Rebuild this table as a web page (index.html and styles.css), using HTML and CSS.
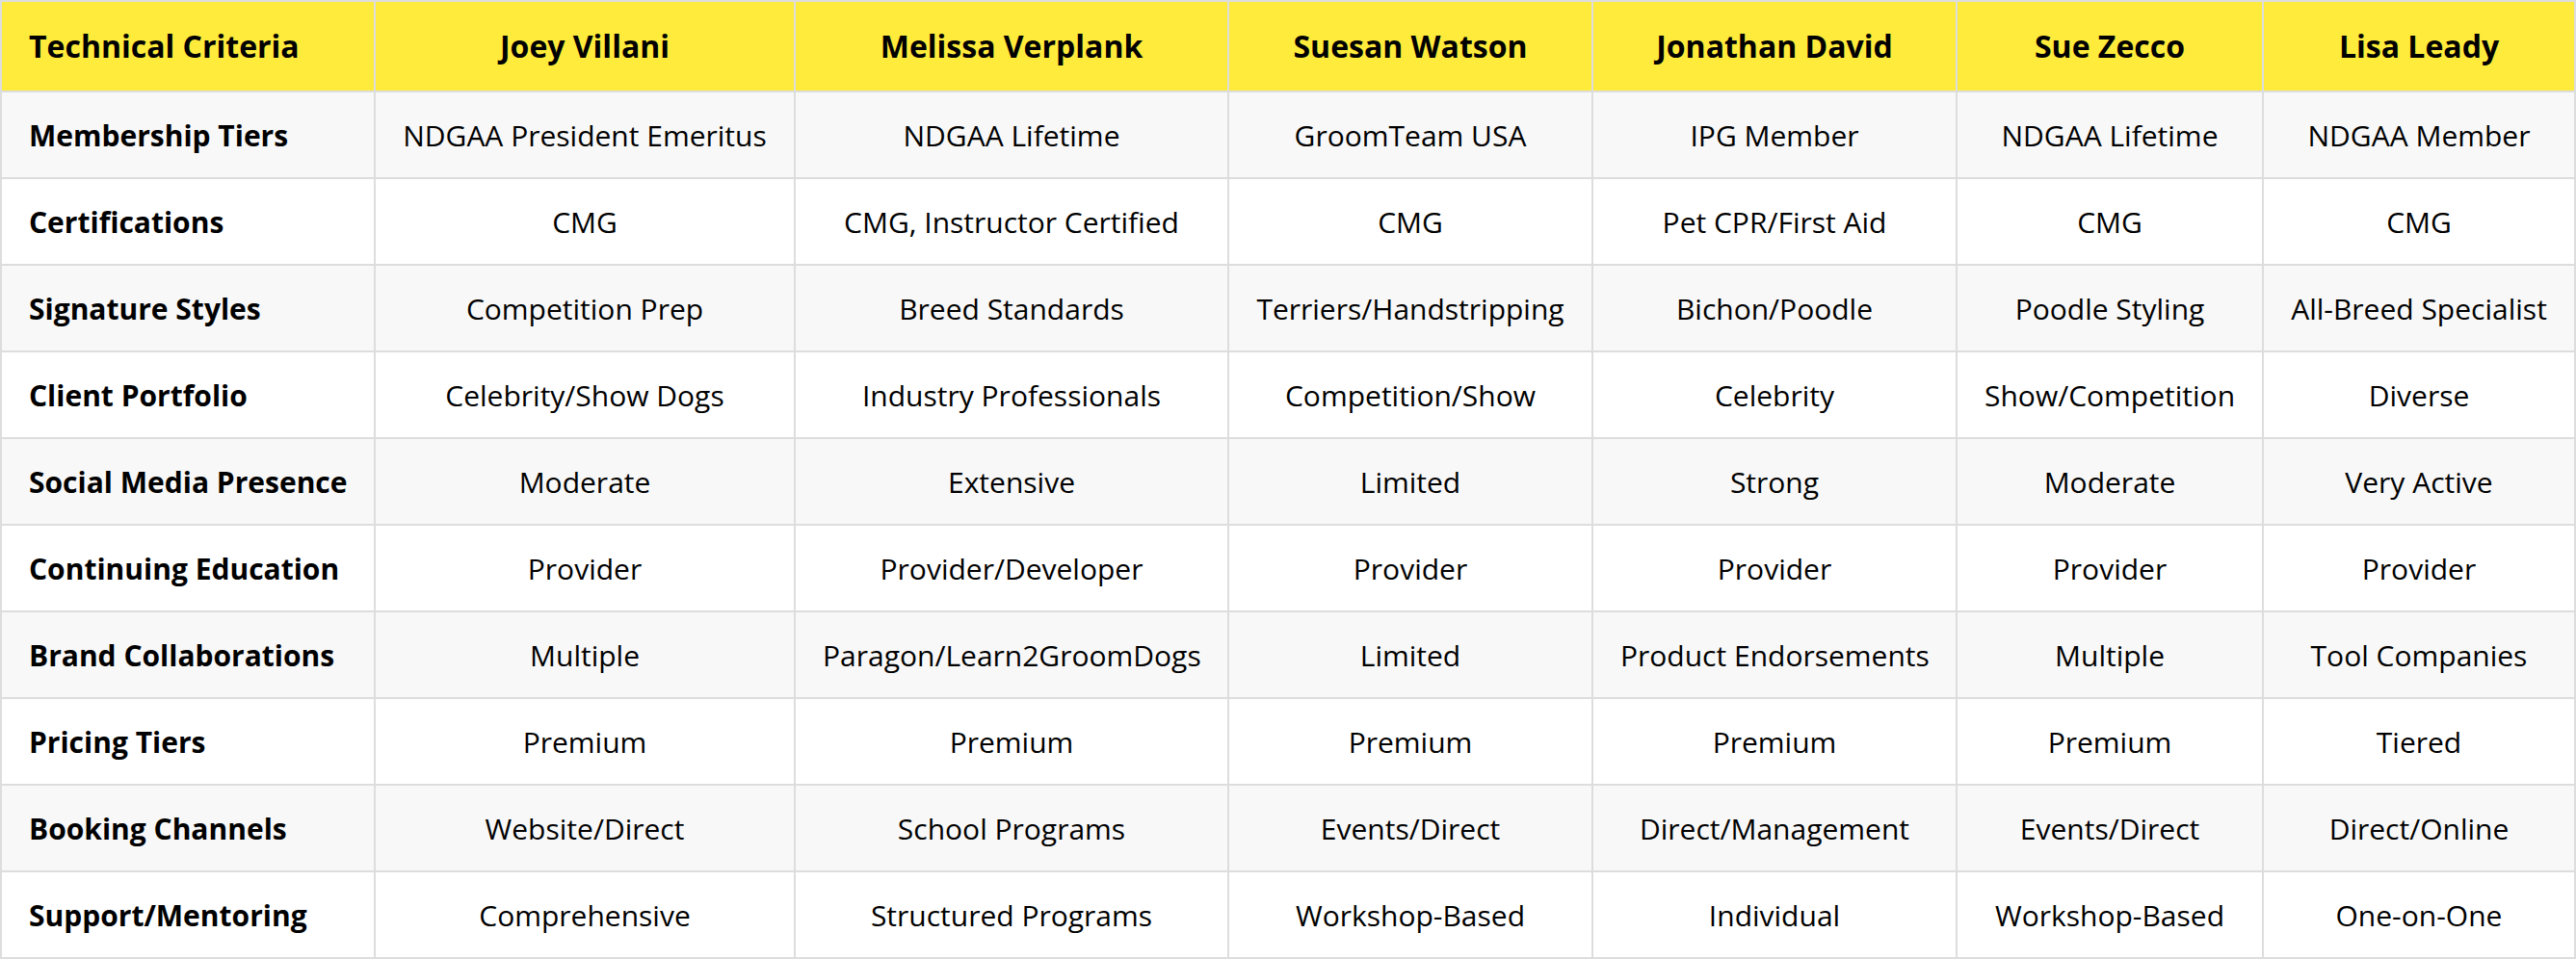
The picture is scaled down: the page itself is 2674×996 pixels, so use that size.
FILE: index.html
```html
<!DOCTYPE html>
<html lang="en">
<head>
<meta charset="utf-8">
<title>Technical Criteria Comparison</title>
<link rel="stylesheet" href="styles.css">
</head>
<body>
<table class="compare">
  <colgroup>
    <col class="c1"><col class="c2"><col class="c3"><col class="c4"><col class="c5"><col class="c6"><col class="c7">
  </colgroup>
  <thead>
    <tr>
      <th class="crit">Technical Criteria</th>
      <th>Joey Villani</th>
      <th>Melissa Verplank</th>
      <th>Suesan Watson</th>
      <th>Jonathan David</th>
      <th>Sue Zecco</th>
      <th>Lisa Leady</th>
    </tr>
  </thead>
  <tbody>
    <tr><td class="crit">Membership Tiers</td><td>NDGAA President Emeritus</td><td>NDGAA Lifetime</td><td>GroomTeam USA</td><td>IPG Member</td><td>NDGAA Lifetime</td><td>NDGAA Member</td></tr>
    <tr><td class="crit">Certifications</td><td>CMG</td><td>CMG, Instructor Certified</td><td>CMG</td><td>Pet CPR/First Aid</td><td>CMG</td><td>CMG</td></tr>
    <tr><td class="crit">Signature Styles</td><td>Competition Prep</td><td>Breed Standards</td><td>Terriers/Handstripping</td><td>Bichon/Poodle</td><td>Poodle Styling</td><td>All-Breed Specialist</td></tr>
    <tr><td class="crit">Client Portfolio</td><td>Celebrity/Show Dogs</td><td>Industry Professionals</td><td>Competition/Show</td><td>Celebrity</td><td>Show/Competition</td><td>Diverse</td></tr>
    <tr><td class="crit">Social Media Presence</td><td>Moderate</td><td>Extensive</td><td>Limited</td><td>Strong</td><td>Moderate</td><td>Very Active</td></tr>
    <tr><td class="crit">Continuing Education</td><td>Provider</td><td>Provider/Developer</td><td>Provider</td><td>Provider</td><td>Provider</td><td>Provider</td></tr>
    <tr><td class="crit">Brand Collaborations</td><td>Multiple</td><td>Paragon/Learn2GroomDogs</td><td>Limited</td><td>Product Endorsements</td><td>Multiple</td><td>Tool Companies</td></tr>
    <tr><td class="crit">Pricing Tiers</td><td>Premium</td><td>Premium</td><td>Premium</td><td>Premium</td><td>Premium</td><td>Tiered</td></tr>
    <tr><td class="crit">Booking Channels</td><td>Website/Direct</td><td>School Programs</td><td>Events/Direct</td><td>Direct/Management</td><td>Events/Direct</td><td>Direct/Online</td></tr>
    <tr><td class="crit">Support/Mentoring</td><td>Comprehensive</td><td>Structured Programs</td><td>Workshop-Based</td><td>Individual</td><td>Workshop-Based</td><td>One-on-One</td></tr>
  </tbody>
</table>
</body>
</html>
```
FILE: styles.css
```css
html, body {
  margin: 0;
  padding: 0;
  background: #ffffff;
}

.compare {
  border-collapse: collapse;
  table-layout: fixed;
  width: 2674px;
  font-family: "Open Sans", "Liberation Sans", sans-serif;
  line-height: 48px;
  color: #000000;
}

.c1 { width: 388px; }
.c2 { width: 436px; }
.c3 { width: 450px; }
.c4 { width: 378px; }
.c5 { width: 378px; }
.c6 { width: 318px; }
.c7 { width: 324px; }

.compare th,
.compare td {
  border: 2px solid #dddddd;
  text-align: center;
  white-space: nowrap;
  overflow: hidden;
}

.compare th {
  background: #ffeb3b;
  font-size: 32px;
  font-weight: 700;
  padding: 22px 28px;
}

.compare td {
  font-size: 30px;
  padding: 21px 28px 19px;
  font-weight: 400;
}

.compare .crit {
  text-align: left;
  font-weight: 700;
}

.compare tbody tr:nth-child(odd) {
  background: #f8f8f8;
}

.compare tbody tr:nth-child(even) {
  background: #ffffff;
}
```
